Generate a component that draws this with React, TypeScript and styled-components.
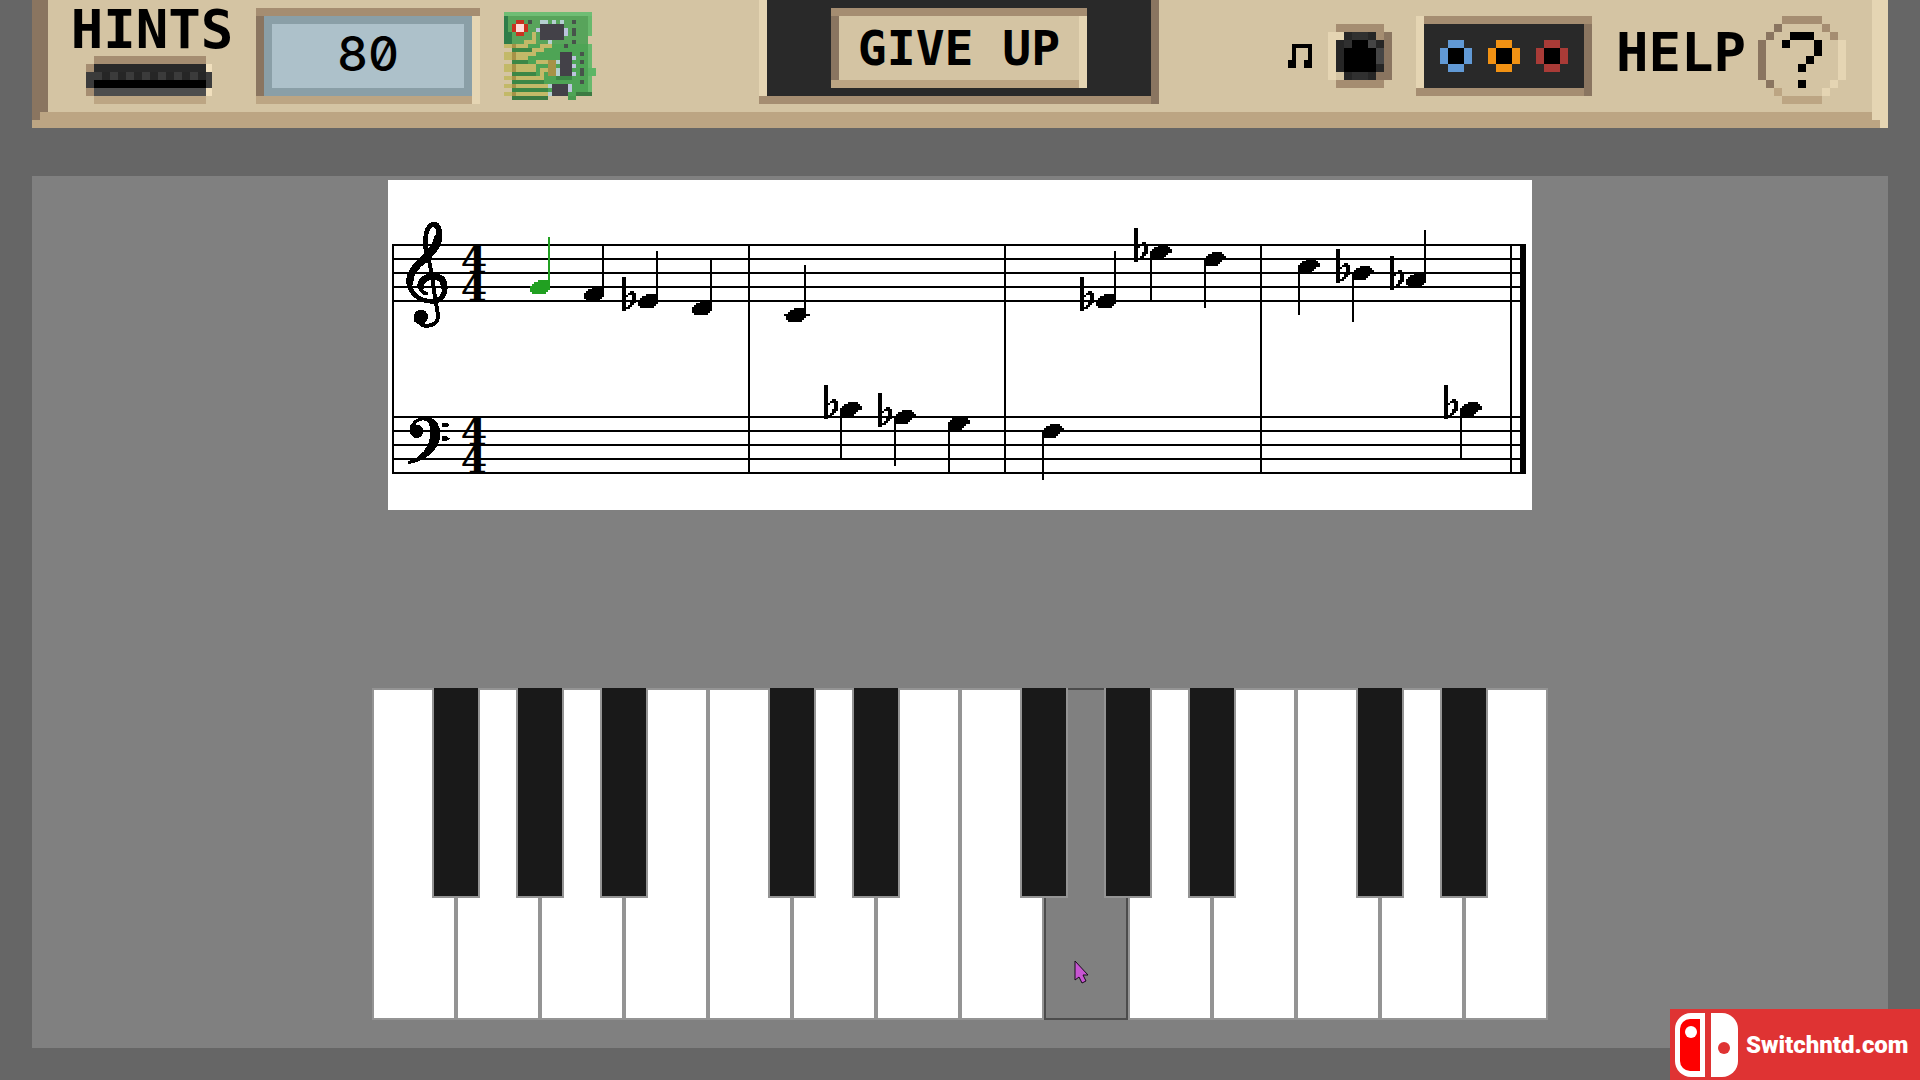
import React from "react";
import styled, { createGlobalStyle, css } from "styled-components";

const color = {
  page: "#666666",
  panel: "#808080",
  case: "#d4c4a3",
  caseTop: "#a58d71",
  caseDark: "#8a7560",
  caseBottom: "#bca583",
  caseLight: "#e5d5b3",
  slot: "#292929",
  screenEdge: "#8a9fa7",
  screen: "#adc1ca",
  keyEdge: "#949494",
};

const GlobalStyle = createGlobalStyle`
  *, *::before, *::after { box-sizing: border-box; }
  body { margin: 0; background: ${color.page}; }
  button { border: 0; margin: 0; padding: 0; background: none; color: inherit; font: inherit; cursor: pointer; }
`;

type Bevel = { top: string; left: string; bottom: string; right: string; fill: string; leftFirst?: boolean };

const bevel = (b: Bevel) => css`
  padding: 8px;
  background:
    linear-gradient(${b.top}, ${b.top}) 100% 0 / ${b.leftFirst ? "calc(100% - 8px)" : "100%"} 8px no-repeat,
    linear-gradient(${b.left}, ${b.left}) 0 0 / 8px calc(100% - 8px) no-repeat,
    linear-gradient(${b.right}, ${b.right}) 100% 100% / 8px 100% no-repeat,
    linear-gradient(${b.bottom}, ${b.bottom}) 0 100% / 100% 8px no-repeat,
    ${b.fill};
`;

const Page = styled.div`
  min-height: 100vh;
  padding: 0 32px 32px;
  display: flex;
  flex-direction: column;
  gap: 48px;
  background: ${color.page};
`;

const Header = styled.header`
  display: grid;
  grid-template-columns: 1fr auto 1fr;
  align-items: center;
  min-height: 128px;
  padding: 0 42px 16px 40px;
  color: #000;
  background:
    linear-gradient(${color.caseDark}, ${color.caseDark}) 0 0 / 16px calc(100% - 16px) no-repeat,
    linear-gradient(${color.caseDark}, ${color.caseDark}) 0 0 / 8px calc(100% - 8px) no-repeat,
    linear-gradient(${color.caseLight}, ${color.caseLight}) 100% 0 / 16px calc(100% - 8px) no-repeat,
    linear-gradient(${color.caseLight}, ${color.caseLight}) 100% 0 / 8px 100% no-repeat,
    linear-gradient(${color.caseBottom}, ${color.caseBottom}) 0 100% / 100% 16px no-repeat,
    ${color.case};
`;

const Group = styled.div<{ $end?: boolean }>`
  display: flex;
  align-items: center;
  justify-content: ${(p) => (p.$end ? "flex-end" : "flex-start")};
  gap: 24px;
`;

const Hints = styled.div`
  display: flex;
  flex-direction: column;
  align-items: center;
  gap: 4px;
  width: 160px;
`;

const Label = styled.span`
  font: bold 54px/44px "DejaVu Sans Mono", monospace;
  white-space: nowrap;
`;

const HelpLabel = styled(Label)`
  padding-bottom: 14px;
`;

const Screen = styled.output`
  display: block;
  width: 224px;
  height: 96px;
  ${bevel({ top: color.caseTop, left: color.caseDark, bottom: color.caseBottom, right: color.caseLight, fill: color.screenEdge })}
`;

const ScreenValue = styled.span`
  display: block;
  height: 64px;
  margin: 8px;
  background: ${color.screen};
  font: 500 48px/60px Inter, sans-serif;
  font-feature-settings: "zero" 1, "tnum" 1;
  text-align: center;
`;

const Bay = styled.div`
  align-self: start;
  && {
    ${bevel({ top: "transparent", left: color.caseLight, bottom: color.caseTop, right: color.caseDark, fill: color.slot })}
    padding: 8px 72px 16px;
  }
`;

const GiveUpButton = styled.button`
  && {
    display: block;
    width: 256px;
    height: 80px;
    font: bold 48px/64px "DejaVu Sans Mono", monospace;
    white-space: nowrap;
    ${bevel({ top: color.caseTop, left: color.caseDark, bottom: color.caseBottom, right: color.caseLight, fill: color.case })}
  }
`;

const Sound = styled.div`
  display: flex;
  align-items: center;
  gap: 16px;
`;

const IconButton = styled.button`
  display: block;
  line-height: 0;
`;

const Jacks = styled.div`
  display: flex;
  align-items: center;
  justify-content: center;
  gap: 16px;
  width: 176px;
  height: 80px;
  ${bevel({
    top: color.caseTop,
    left: color.caseLight,
    bottom: color.caseTop,
    right: color.caseDark,
    fill: color.slot,
    leftFirst: true,
  })}
`;

const HelpButton = styled.button`
  && {
    display: flex;
    align-items: center;
    gap: 12px;
    padding-top: 8px;
  }
`;

const Panel = styled.main`
  flex: 1;
  display: flex;
  flex-direction: column;
  align-items: center;
  justify-content: space-between;
  gap: 32px;
  padding: 4px 0 28px;
  background: ${color.panel};
`;

const Sheet = styled.section`
  width: 1144px;
  max-width: 100%;
  background: #fff;
  line-height: 0;
`;

const ScoreDrawing = styled.svg`
  display: block;
  width: 100%;
  height: auto;
`;

const TimeDigit = styled.text`
  font: bold 38px "DejaVu Serif", serif;
  text-anchor: middle;
`;

const Keyboard = styled.section`
  display: flex;
  width: 1176px;
  max-width: 100%;
`;

const KeySlot = styled.div`
  position: relative;
  flex: 1;
  height: 332px;
`;

const WhiteKey = styled.button<{ $pressed: boolean }>`
  && {
    display: block;
    width: 100%;
    height: 100%;
    border: 2px solid ${(p) => (p.$pressed ? "#4c4c4c" : color.keyEdge)};
    background: ${(p) => (p.$pressed ? color.panel : "#fff")};
  }
`;

const BlackKey = styled.button`
  && {
    position: absolute;
    z-index: 1;
    top: 0;
    right: -24px;
    width: 48px;
    height: 210px;
    border: 2px solid ${color.keyEdge};
    border-top: 0;
    background: #191919;
  }
`;

const Pointer = styled.svg`
  position: absolute;
  z-index: 2;
  top: 271px;
  left: 29px;
  pointer-events: none;
`;

const Badge = styled.a`
  position: fixed;
  right: 0;
  bottom: 0;
  display: flex;
  align-items: center;
  gap: 8px;
  width: 250px;
  height: 71px;
  padding-left: 5px;
  background: #df3333;
  color: #fff;
  font: 900 24px/32px Roboto, sans-serif;
  text-decoration: none;
  white-space: nowrap;

  svg {
    flex: none;
  }
`;

/* ---------- pixel drawings ---------- */

type Palette = Record<string, string>;

function Cells({ rows, palette, size, x = 0, y = 0 }: { rows: string[]; palette: Palette; size: number; x?: number; y?: number }) {
  const rects: React.ReactNode[] = [];
  rows.forEach((row, r) => {
    let c = 0;
    while (c < row.length) {
      const ch = row[c];
      let end = c + 1;
      while (end < row.length && row[end] === ch) end++;
      if (palette[ch]) {
        rects.push(
          <rect key={`${r}-${c}`} x={x + c * size} y={y + r * size} width={(end - c) * size} height={size} fill={palette[ch]} />
        );
      }
      c = end;
    }
  });
  return <>{rects}</>;
}

function PixelIcon({ rows, palette, size }: { rows: string[]; palette: Palette; size: number }) {
  return (
    <svg width={rows[0].length * size} height={rows.length * size} shapeRendering="crispEdges" aria-hidden="true">
      <Cells rows={rows} palette={palette} size={size} />
    </svg>
  );
}

const casePalette: Palette = {
  t: color.caseTop,
  D: color.caseDark,
  m: color.caseBottom,
  l: color.caseLight,
  a: "#262626",
  b: "#303030",
  c: "#454545",
  K: "#000",
};

const noteRows = [".#####", ".#...#", ".#...#", ".#...#", "##..##", "##..##"];

const knobRows = [
  ".tttttt.",
  "llabbatD",
  "labKKcaD",
  "laKKKKcD",
  "laKKKKcD",
  "laKKKKaD",
  "l.abbaDD",
  ".tttttt.",
];

const jackRows = [".##.", "#KK#", "#KK#", ".##."];

const helpRows = [
  "...ttttt...",
  "..D.....t..",
  ".D..KKK..t.",
  "D..K...K..l",
  "D......K..l",
  "D.....K...l",
  "D....K....l",
  "D.........l",
  ".D...K...l.",
  "..m.....l..",
  "...mmmmm...",
];

const slotTeeth = [0, 1, 2, 3, 4, 5, 6];

function CardSlot() {
  return (
    <svg width="132" height="48" shapeRendering="crispEdges" aria-hidden="true">
      <rect x="8" y="0" width="112" height="8" fill={color.caseTop} />
      <rect x="0" y="8" width="8" height="32" fill={color.caseTop} />
      <rect x="120" y="8" width="6" height="32" fill="#f0dfbd" />
      <rect x="8" y="8" width="112" height="8" fill="#292929" />
      <rect x="0" y="16" width="126" height="16" fill="#3b3b3b" />
      {slotTeeth.map((i) => (
        <rect key={i} x={16 + i * 16} y="16" width="8" height="8" fill="#262626" />
      ))}
      <rect x="8" y="24" width="112" height="8" fill="#000" />
      <rect x="8" y="32" width="112" height="8" fill="#4d4d4d" />
      <rect x="8" y="40" width="112" height="8" fill={color.caseBottom} />
    </svg>
  );
}

type Block = [string, number, number, number, number];

const boardBlocks: Block[] = [
  ["#58a45b", 0, 0, 22, 8],
  ["#4ea455", 2, 8, 20, 13],
  ["#6fbd74", 0, 0, 22, 1],
  ["#68b96c", 21, 1, 1, 20],
  ["#58a45b", 20, 1, 1, 5],
  [color.case, 21, 6, 1, 2],
  ["#5db565", 21, 14, 2, 2],
  ["#2f7d49", 0, 1, 1, 7],
  ["#2f7d49", 1, 5, 1, 3],
  ["#3c8746", 2, 9, 5, 1],
  ["#3c8746", 2, 12, 4, 1],
  ["#3c8746", 2, 15, 6, 1],
  ["#3c8746", 2, 17, 8, 1],
  ["#3c8746", 2, 19, 9, 1],
  ["#3c7a42", 2, 21, 9, 1],
  ["#4a9a50", 16, 21, 2, 1],
  ["#3c7a42", 18, 20, 4, 1],
  ["#c3b968", 0, 8, 6, 1],
  ["#c3b968", 5, 7, 3, 1],
  ["#c3b968", 7, 5, 1, 2],
  ["#c3b968", 0, 10, 6, 2],
  ["#c3b968", 6, 10, 2, 1],
  ["#c3b968", 7, 9, 3, 1],
  ["#c3b968", 9, 8, 3, 1],
  ["#c3b968", 0, 13, 8, 2],
  ["#c3b968", 8, 12, 3, 1],
  ["#a69247", 11, 12, 2, 1],
  ["#c3b968", 0, 16, 10, 1],
  ["#c3b968", 9, 14, 1, 2],
  ["#c3b968", 9, 14, 3, 1],
  ["#a69247", 11, 13, 2, 3],
  ["#c3b968", 0, 18, 11, 1],
  ["#c3b968", 0, 20, 11, 1],
  ["#a69247", 2, 8, 1, 1],
  ["#a69247", 2, 10, 1, 2],
  ["#a69247", 2, 13, 1, 2],
  ["#a69247", 2, 16, 1, 1],
  ["#a69247", 2, 18, 1, 1],
  ["#a69247", 2, 20, 1, 1],
  ["#c7321f", 3, 2, 2, 4],
  ["#c7321f", 2, 3, 4, 2],
  ["#ffdcd8", 3, 3, 2, 2],
  ["#434148", 9, 3, 6, 4],
  ["#b4cfd0", 9, 2, 2, 1],
  ["#b4cfd0", 12, 2, 1, 1],
  ["#b4cfd0", 14, 2, 1, 1],
  ["#bcc4dd", 8, 4, 1, 1],
  ["#bcc4dd", 15, 4, 1, 2],
  ["#b4cfd0", 11, 7, 1, 1],
  ["#434148", 14, 10, 3, 6],
  ["#bcc4dd", 17, 11, 1, 1],
  ["#bcc4dd", 17, 13, 1, 1],
  ["#bcc4dd", 17, 15, 1, 1],
  ["#b4cfd0", 13, 12, 1, 1],
  ["#b4cfd0", 13, 14, 1, 2],
  ["#3c8746", 13, 16, 4, 1],
  ["#434148", 12, 18, 4, 3],
  ["#bcc4dd", 16, 18, 1, 2],
  ["#b4cfd0", 11, 18, 1, 1],
  ["#b4cfd0", 11, 20, 1, 1],
  ["#47544b", 6, 2, 1, 1],
  ["#47544b", 17, 2, 1, 1],
  ["#47544b", 17, 4, 1, 2],
  ["#47544b", 17, 7, 1, 1],
  ["#47544b", 15, 8, 1, 1],
  ["#47544b", 19, 10, 1, 1],
  ["#47544b", 19, 12, 1, 1],
  ["#47544b", 19, 14, 1, 2],
  ["#47544b", 19, 17, 1, 1],
];

function CircuitBoard() {
  return (
    <svg width="92" height="88" viewBox="0 0 23 22" shapeRendering="crispEdges" aria-hidden="true">
      {boardBlocks.map(([fill, x, y, w, h], i) => (
        <rect key={i} x={x} y={y} width={w} height={h} fill={fill} />
      ))}
    </svg>
  );
}

/* ---------- score ---------- */

const headUp = [
  "....#####.",
  "..########",
  ".#########",
  "##########",
  "##########",
  "#########.",
  ".#######..",
];

const headDown = [
  "....#####..",
  "..########.",
  ".##########",
  "###########",
  "#########..",
  "########...",
  ".######....",
];

const flatRows = [
  "##.....",
  "##.....",
  "##.....",
  "##.....",
  "##.....",
  "##.....",
  "##.....",
  "##..##.",
  "##.####",
  "###..##",
  "##...##",
  "##...##",
  "##..###",
  "##..##.",
  "##.##..",
  "####...",
  "##.....",
];

type Note = { stem: number; y: number; up?: boolean; flat?: boolean; ledger?: boolean; hit?: boolean };

const notes: Note[] = [
  { stem: 160, y: 107, up: true, hit: true },
  { stem: 214, y: 114, up: true },
  { stem: 268, y: 121, up: true, flat: true },
  { stem: 322, y: 128, up: true },
  { stem: 416, y: 135, up: true, ledger: true },
  { stem: 452, y: 229, flat: true },
  { stem: 506, y: 237, flat: true },
  { stem: 560, y: 243 },
  { stem: 654, y: 251 },
  { stem: 726, y: 121, up: true, flat: true },
  { stem: 762, y: 72, flat: true },
  { stem: 816, y: 79 },
  { stem: 910, y: 86 },
  { stem: 964, y: 93, flat: true },
  { stem: 1036, y: 100, up: true, flat: true },
  { stem: 1072, y: 229, flat: true },
];

const staffLines = [64, 78, 92, 106, 120, 236, 250, 264, 278, 292];
const barLines = [4, 360, 616, 872, 1122];

function QuarterNote({ stem, y, up, flat, ledger, hit }: Note) {
  const ink = hit ? "#21a021" : "#000";
  return (
    <g fill={ink}>
      <rect x={stem} y={up ? y - 50 : y} width="2" height={up ? 50 : 49} />
      <Cells rows={up ? headUp : headDown} palette={{ "#": ink }} size={2} x={up ? stem - 18 : stem} y={y - 7} />
      {flat && <Cells rows={flatRows} palette={{ "#": ink }} size={2} x={up ? stem - 34 : stem - 16} y={y - 24} />}
      {ledger && <rect x={stem - 20} y={y - 1} width="26" height="2" />}
    </g>
  );
}

function TrebleClef() {
  return (
    <g transform="translate(12 35) scale(0.3333)" fill="none" stroke="#000" strokeLinecap="round">
      <path d="M79 112C71 70 80 30 99 28" strokeWidth="14" />
      <path d="M99 28C117 28 121 50 116 72" strokeWidth="17" />
      <path d="M114 70C111 95 90 115 70 135" strokeWidth="25" />
      <path d="M72 133C46 155 30 172 29 202" strokeWidth="22" />
      <path d="M27 200C28 236 60 259 95 259" strokeWidth="14" />
      <path d="M95 259C122 259 135 240 135 215" strokeWidth="16" />
      <path d="M132 215C132 195 122 185 100 185C78 185 61 196 62 215" strokeWidth="20" />
      <path d="M60 215C62 228 68 234 80 236" strokeWidth="11" />
      <path d="M82 112L94 170L107 260L114 298C116 326 95 336 70 331L48 316" strokeWidth="12" />
      <circle cx="63" cy="305" r="21" fill="#000" stroke="none" />
    </g>
  );
}

function BassClef() {
  return (
    <g transform="translate(12 230) scale(0.3333)" fill="#000">
      <path d="M29 62C27 38 48 21 78 21C106 21 123 44 121 76C118 116 84 152 24 163L24 155C64 142 88 112 91 76C93 46 86 31 70 31C56 31 46 39 45 50Z" />
      <circle cx="50" cy="64" r="20" />
      <path d="M126 38H140L150 45L140 52H126ZM126 79H140L150 86L140 93H126Z" />
    </g>
  );
}

function Score() {
  return (
    <ScoreDrawing viewBox="0 0 1144 330" shapeRendering="crispEdges" role="img" aria-label="Four bars in 4/4, treble and bass staves">
      {staffLines.map((y) => (
        <rect key={y} x="4" y={y} width="1130" height="2" />
      ))}
      {barLines.map((x) => (
        <rect key={x} x={x} y="64" width="2" height="230" />
      ))}
      <rect x="1132" y="64" width="6" height="230" />
      <TrebleClef />
      <BassClef />
      {[92, 120, 264, 292].map((y) => (
        <TimeDigit key={y} x="86" y={y + 1}>
          4
        </TimeDigit>
      ))}
      {notes.map((n) => (
        <QuarterNote key={n.stem} {...n} />
      ))}
    </ScoreDrawing>
  );
}

/* ---------- keyboard ---------- */

const whiteKeys = ["F3", "G3", "A3", "B3", "C4", "D4", "E4", "F4", "G4", "A4", "B4", "C5", "D5", "E5"];
const hasSharp = (name: string) => !/^[BE]/.test(name);
const pressedKey = "G4";

function Piano() {
  return (
    <Keyboard aria-label="Piano keyboard">
      {whiteKeys.map((name) => (
        <KeySlot key={name}>
          <WhiteKey type="button" aria-label={name} $pressed={name === pressedKey} />
          {hasSharp(name) && <BlackKey type="button" aria-label={`${name} sharp`} />}
          {name === pressedKey && (
            <Pointer width="18" height="26" aria-hidden="true">
              <path d="M2 2V21L6 18L9 24L13 22L10 16H15Z" fill="#c755d2" stroke="#160a18" strokeWidth="1" />
            </Pointer>
          )}
        </KeySlot>
      ))}
    </Keyboard>
  );
}

function ConsoleLogo() {
  return (
    <svg width="63" height="64" viewBox="0 0 63 64" aria-hidden="true">
      <path d="M16 0H30V64H16A16 16 0 0 1 0 48V16A16 16 0 0 1 16 0Z" fill="#fff" />
      <path d="M15 6H25V58H15A10 10 0 0 1 5 48V16A10 10 0 0 1 15 6Z" fill="#fe0000" />
      <circle cx="16" cy="19" r="6" fill="#fff" />
      <path d="M36 0H47A16 16 0 0 1 63 16V48A16 16 0 0 1 47 64H36Z" fill="#fff" />
      <circle cx="49" cy="35" r="6" fill="#df3333" />
    </svg>
  );
}

const jacks = [
  { name: "Blue jack", fill: "#6199d5" },
  { name: "Orange jack", fill: "#f29213" },
  { name: "Red jack", fill: "#a93b37" },
];

export default function App() {
  return (
    <>
      <GlobalStyle />
      <Page>
        <Header>
          <Group>
            <Hints>
              <Label>HINTS</Label>
              <CardSlot />
            </Hints>
            <Screen>
              <ScreenValue>80</ScreenValue>
            </Screen>
            <IconButton type="button" aria-label="Use hint card">
              <CircuitBoard />
            </IconButton>
          </Group>
          <Bay>
            <GiveUpButton type="button">GIVE UP</GiveUpButton>
          </Bay>
          <Group $end>
            <Sound>
              <PixelIcon rows={noteRows} palette={{ "#": "#000" }} size={4} />
              <IconButton type="button" aria-label="Music volume">
                <PixelIcon rows={knobRows} palette={casePalette} size={8} />
              </IconButton>
            </Sound>
            <Jacks>
              {jacks.map((j) => (
                <IconButton key={j.name} type="button" aria-label={j.name}>
                  <PixelIcon rows={jackRows} palette={{ "#": j.fill, K: "#000" }} size={8} />
                </IconButton>
              ))}
            </Jacks>
            <HelpButton type="button">
              <HelpLabel>HELP</HelpLabel>
              <PixelIcon rows={helpRows} palette={casePalette} size={8} />
            </HelpButton>
          </Group>
        </Header>
        <Panel>
          <Sheet>
            <Score />
          </Sheet>
          <Piano />
        </Panel>
      </Page>
      <Badge href="#">
        <ConsoleLogo />
        Switchntd.com
      </Badge>
    </>
  );
}
